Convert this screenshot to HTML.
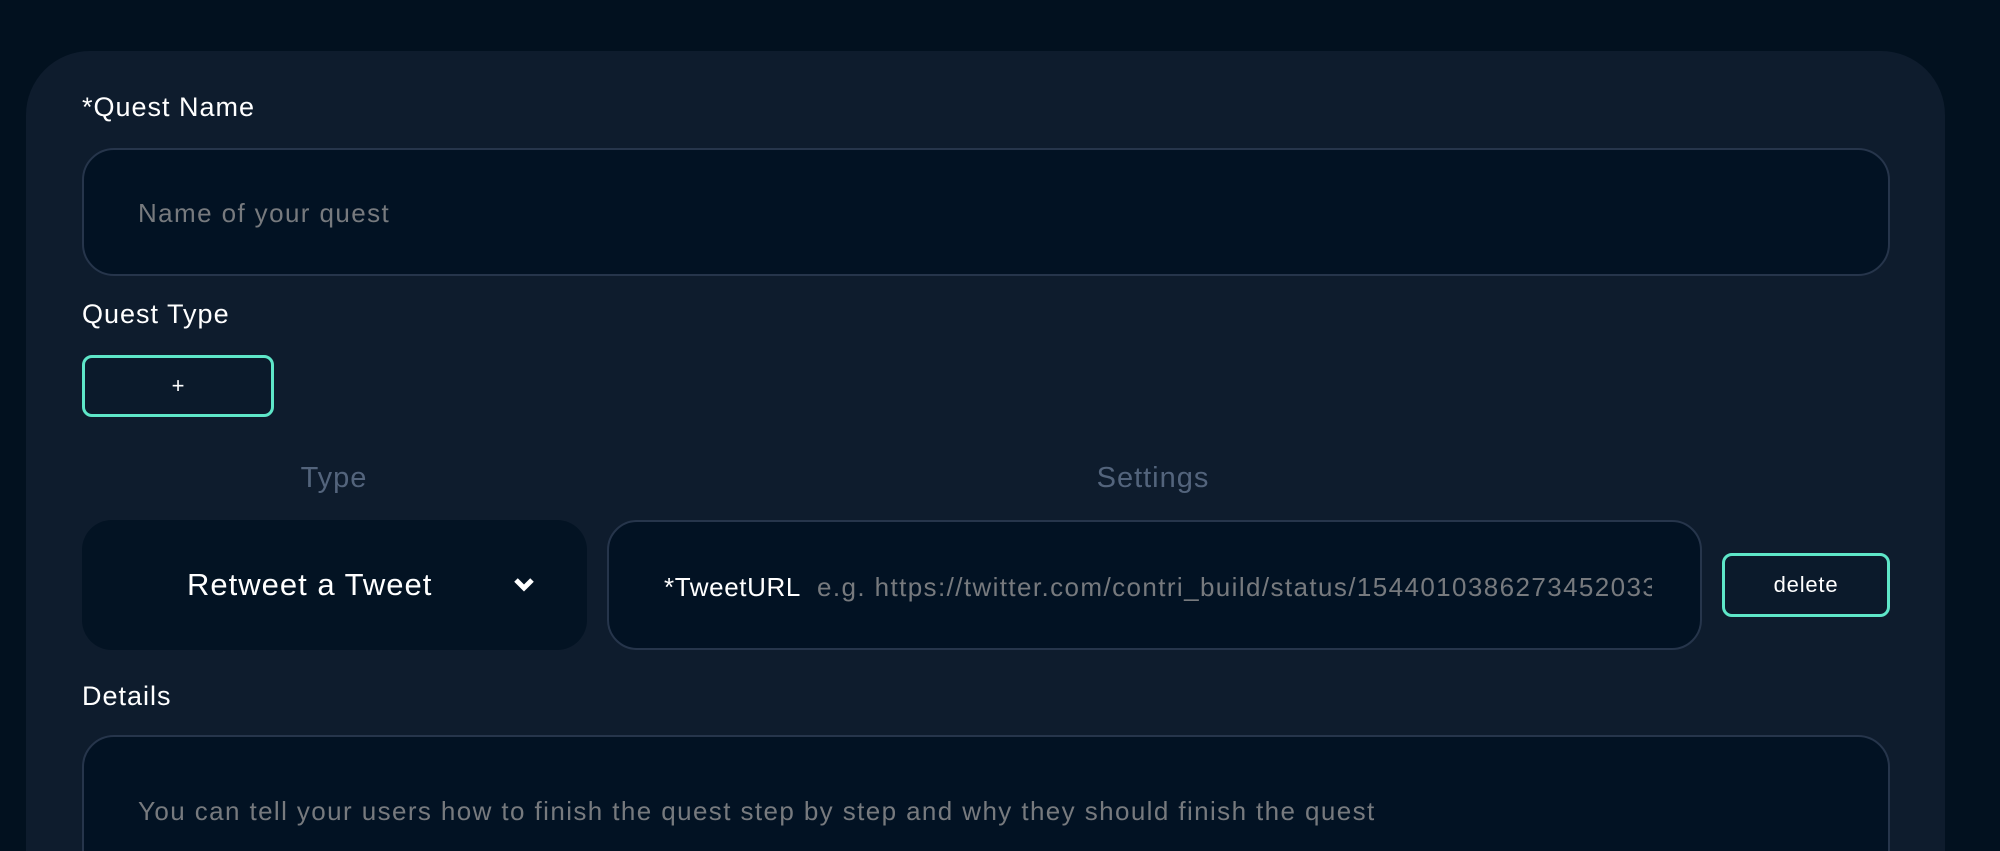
<!DOCTYPE html>
<html><head><meta charset="utf-8"><style>
*{box-sizing:border-box;margin:0;padding:0}
html,body{width:2000px;height:851px;overflow:hidden;background:#02111f;font-family:"Liberation Sans",sans-serif;position:relative}
.card{position:absolute;left:26px;top:51px;width:1919px;height:800px;background:#0e1c2d;border-radius:64px 64px 0 0;}
.lbl{position:absolute;color:#fff;font-size:27px;letter-spacing:1px}
.inp{position:absolute;background:#021223;border:2px solid #26354b;border-radius:32px;}
.ph{position:absolute;color:#777a7e;font-size:26px;white-space:nowrap;letter-spacing:1.4px}
.btn{position:absolute;border:3px solid #5ee6c8;border-radius:10px;color:#fff;display:flex;align-items:center;justify-content:center;background:#0b1a2b;}
.hd{position:absolute;color:#53647c;font-size:29px;transform:translateX(-50%);letter-spacing:1px}
</style></head><body>
<div class="card"></div>
<div class="lbl" style="left:82px;top:92px">*Quest Name</div>
<div class="inp" style="left:82px;top:148px;width:1808px;height:128px"></div>
<div class="ph" style="left:138px;top:198px">Name of your quest</div>
<div class="lbl" style="left:82px;top:299px">Quest Type</div>
<div class="btn" style="left:82px;top:355px;width:192px;height:62px;font-size:22px">+</div>
<div class="hd" style="left:334px;top:462px">Type</div>
<div class="hd" style="left:1153px;top:462px">Settings</div>
<div style="position:absolute;left:82px;top:520px;width:505px;height:130px;background:#031323;border-radius:30px"></div>
<div class="lbl" style="left:187px;top:567px;font-size:31px;letter-spacing:1px">Retweet a Tweet</div>
<svg style="position:absolute;left:513px;top:577px" width="22" height="16" viewBox="0 0 22 16"><path d="M3 3 L11 11 L19 3" stroke="#fff" stroke-width="5" fill="none"/></svg>
<div class="inp" style="left:607px;top:520px;width:1095px;height:130px;border-radius:30px;overflow:hidden">
<div style="position:absolute;left:55px;top:50px;color:#fff;font-size:26px;white-space:nowrap;letter-spacing:0.6px">*TweetURL</div>
<div class="ph" style="left:208px;top:50px;width:835px;overflow:hidden">e.g. https://twitter.com/contri_build/status/1544010386273452033</div>
</div>
<div class="btn" style="left:1722px;top:553px;width:168px;height:64px;font-size:22px;letter-spacing:0.8px">delete</div>
<div class="lbl" style="left:82px;top:681px">Details</div>
<div class="inp" style="left:82px;top:735px;width:1808px;height:140px;border-bottom-left-radius:0;border-bottom-right-radius:0"></div>
<div class="ph" style="left:138px;top:796px">You can tell your users how to finish the quest step by step and why they should finish the quest</div>
</body></html>
